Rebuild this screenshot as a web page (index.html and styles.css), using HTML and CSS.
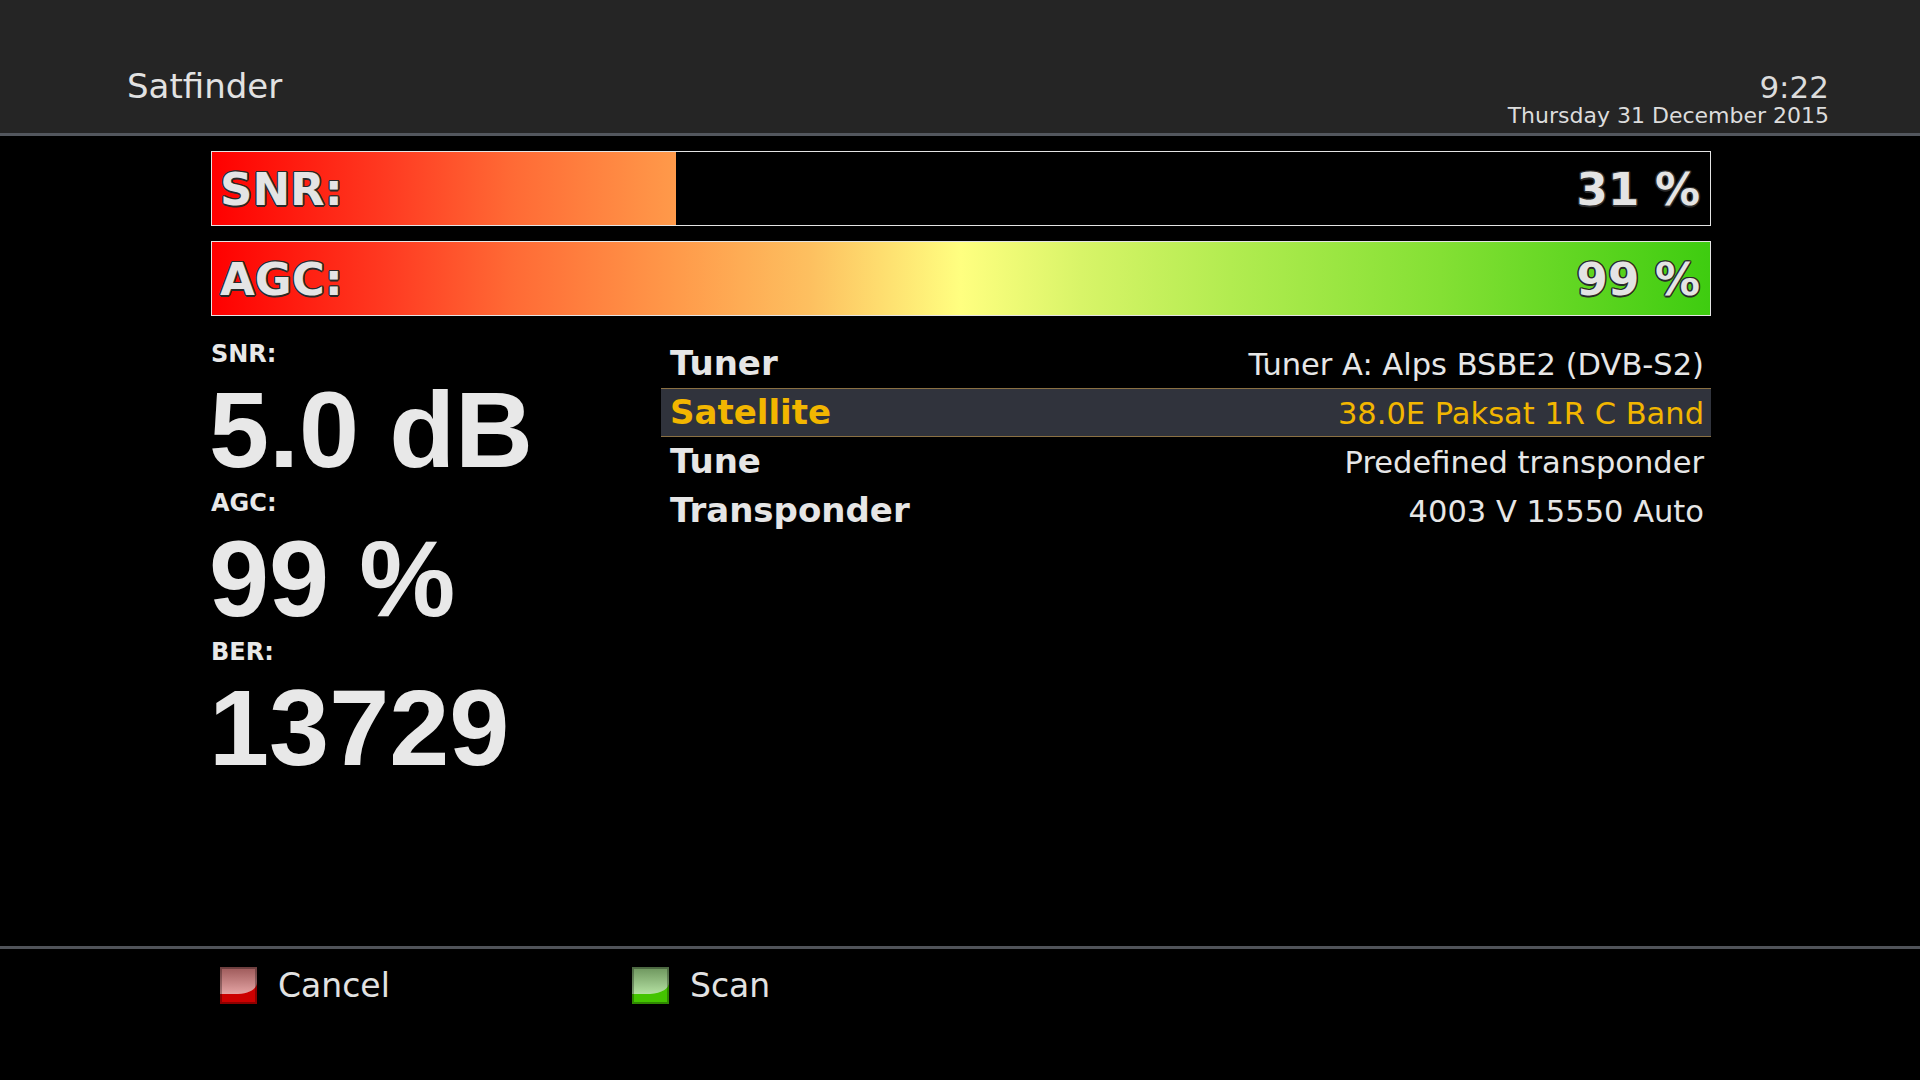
FILE: index.html
```html
<!DOCTYPE html>
<html lang="en">
<head>
  <meta charset="UTF-8">
  <title>Satfinder</title>
  <link rel="stylesheet" href="styles.css">
</head>
<body>

  <div class="header">
    <div class="title">Satfinder</div>
    <div class="clock">
      <div class="time">9:22</div>
      <div class="date">Thursday 31 December 2015</div>
    </div>
  </div>

  <div class="main">
    <div class="bar">
      <div class="bar-level"><div class="bar-rest" style="margin-left: 31%;"></div></div>
      <div class="bar-text"><span>SNR:</span><span>31 %</span></div>
    </div>
    <div class="bar">
      <div class="bar-level"><div class="bar-rest" style="margin-left: 100%;"></div></div>
      <div class="bar-text"><span>AGC:</span><span>99 %</span></div>
    </div>

    <div class="details">
      <div class="readings">
        <div class="reading-label">SNR:</div>
        <div class="reading-value">5.0 dB</div>
        <div class="reading-label">AGC:</div>
        <div class="reading-value">99 %</div>
        <div class="reading-label">BER:</div>
        <div class="reading-value">13729</div>
      </div>

      <div class="config-list">
        <div class="config-row">
          <span class="config-name">Tuner</span>
          <span class="config-value">Tuner A: Alps BSBE2 (DVB-S2)</span>
        </div>
        <div class="config-row selected">
          <span class="config-name">Satellite</span>
          <span class="config-value">38.0E Paksat 1R C Band</span>
        </div>
        <div class="config-row">
          <span class="config-name">Tune</span>
          <span class="config-value">Predefined transponder</span>
        </div>
        <div class="config-row">
          <span class="config-name">Transponder</span>
          <span class="config-value">4003 V 15550 Auto</span>
        </div>
      </div>
    </div>
  </div>

  <div class="footer">
    <div class="key">
      <svg class="key-icon" width="37" height="37" viewBox="0 0 37 37">
        <defs>
          <linearGradient id="redGloss" x1="0" y1="0" x2="0" y2="1">
            <stop offset="0" stop-color="#9c5858"/>
            <stop offset="1" stop-color="#e4a4a4"/>
          </linearGradient>
        </defs>
        <rect width="37" height="37" fill="#cc0000"/>
        <path d="M0 0 H37 V15 C37 22 30 26 18 27 H0 Z" fill="url(#redGloss)"/>
        <rect x="1" y="1" width="35" height="35" fill="none" stroke="#000" stroke-opacity="0.3" stroke-width="2"/>
      </svg>
      <span>Cancel</span>
    </div>
    <div class="key">
      <svg class="key-icon" width="37" height="37" viewBox="0 0 37 37">
        <defs>
          <linearGradient id="greenGloss" x1="0" y1="0" x2="0" y2="1">
            <stop offset="0" stop-color="#6c945c"/>
            <stop offset="1" stop-color="#b4e0a2"/>
          </linearGradient>
        </defs>
        <rect width="37" height="37" fill="#44c400"/>
        <path d="M0 0 H37 V15 C37 22 30 26 18 27 H0 Z" fill="url(#greenGloss)"/>
        <rect x="1" y="1" width="35" height="35" fill="none" stroke="#000" stroke-opacity="0.3" stroke-width="2"/>
      </svg>
      <span>Scan</span>
    </div>
  </div>

</body>
</html>
```

FILE: styles.css
```css
body {
  margin: 0;
  width: 1920px;
  height: 1080px;
  background: #000;
  color: #e6e6e6;
  font-family: "DejaVu Sans", Verdana, sans-serif;
  display: flex;
  flex-direction: column;
  overflow: hidden;
}

/* top bar */
.header {
  height: 133px;
  background: #252525;
  border-bottom: 3px solid #53575e;
  display: flex;
  justify-content: space-between;
  align-items: flex-start;
  padding: 0 91px 0 127px;
}

.title {
  margin-top: 66px;
  font-size: 34px;
  line-height: 40px;
  color: #e2e2e2;
}

.clock {
  margin-top: 71px;
  text-align: right;
  color: #dcdcdc;
}

.time {
  font-size: 31px;
  line-height: 32px;
}

.date {
  font-size: 22px;
  line-height: 25px;
}

/* content */
.main {
  flex: 1;
  width: 1500px;
  margin-left: 211px;
  padding-top: 15px;
}

.bar {
  box-sizing: border-box;
  height: 75px;
  margin-bottom: 15px;
  border: 1px solid #e4e4e4;
  display: grid;
  grid-template-rows: 73px;
  background: linear-gradient(to right,
    #ff0000 0%, #ff3c22 12%, #ff6a35 20%, #ff9a4a 31%, #fdc060 40%,
    #ffff80 50%, #d8f468 58%, #b2ec50 68%, #84e034 82%, #3ecc10 100%);
}

.bar-level,
.bar-text {
  grid-area: 1 / 1;
}

.bar-level {
  display: flex;
}

.bar-rest {
  flex: 1;
  background: #000;
}

.bar-text {
  display: flex;
  justify-content: space-between;
  padding: 0 10px 0 8px;
  font-weight: bold;
  font-size: 45px;
  line-height: 76px;
  color: #e4e4e4;
  white-space: nowrap;
  text-shadow:
    1.5px 0 0 #2a2a2a, -1.5px 0 0 #2a2a2a, 0 1.5px 0 #2a2a2a, 0 -1.5px 0 #2a2a2a,
    1px 1px 0 #2a2a2a, -1px -1px 0 #2a2a2a, 1px -1px 0 #2a2a2a, -1px 1px 0 #2a2a2a;
}

.details {
  display: flex;
  margin-top: 23px;
}

.readings {
  width: 450px;
}

.reading-label {
  font-weight: bold;
  font-size: 24px;
  line-height: 30px;
  color: #e8e8e8;
}

.reading-value {
  margin: 2px 0 0 -2px;
  font-family: "Liberation Sans", Arial, sans-serif;
  font-weight: bold;
  font-size: 108px;
  line-height: 117px;
  color: #e8e8e8;
  white-space: nowrap;
}

.config-list {
  flex: 1;
}

.config-row {
  box-sizing: border-box;
  height: 49px;
  padding: 0 7px 0 9px;
  border-top: 1px solid transparent;
  border-bottom: 1px solid transparent;
  display: flex;
  justify-content: space-between;
  align-items: baseline;
  white-space: nowrap;
}

.config-name {
  font-weight: bold;
  font-size: 34px;
  line-height: 47px;
}

.config-value {
  font-size: 30.5px;
}

.config-row.selected {
  background: #30333c;
  border-color: #8a7043;
  color: #f2b600;
}

/* colour keys */
.footer {
  height: 113px;
  border-top: 3px solid #505359;
  padding: 18px 0 0 220px;
  display: flex;
  align-items: flex-start;
}

.key {
  width: 412px;
  display: flex;
  align-items: center;
  gap: 21px;
  font-size: 33px;
  line-height: 37px;
  color: #e2e2e2;
}

.key-icon {
  display: block;
  flex: none;
}
```
